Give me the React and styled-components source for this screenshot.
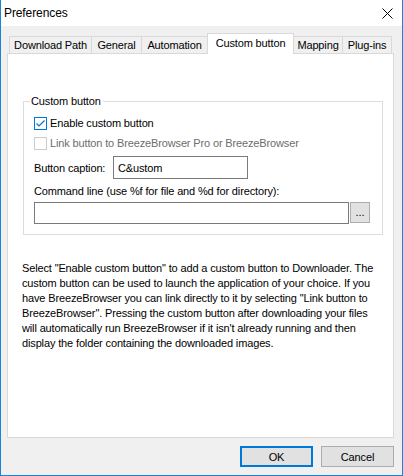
import React from "react";
import styled, { createGlobalStyle } from "styled-components";

const Global = createGlobalStyle`
  html, body { margin: 0; padding: 0; background: #f0f0f0; }
  body { font-family: "Liberation Sans", Arial, sans-serif; font-size: 11px; color: #000; }
  * { box-sizing: border-box; }
`;

const Window = styled.div`
  width: 403px;
  height: 476px;
  background: #f0f0f0;
  border: 1px solid #1883d7;
  border-top: none;
  display: flex;
  flex-direction: column;
  white-space: nowrap;
  letter-spacing: -0.14px;
`;

const TitleBar = styled.div`
  height: 26px;
  background: #fff;
  display: flex;
  align-items: center;
  justify-content: space-between;
  padding: 0 9px 0 3px;
  font-size: 12px;
  letter-spacing: -0.1px;
`;

const Body = styled.div`
  flex: 1;
  display: flex;
  flex-direction: column;
  padding: 7px 8px 8px 6px;
`;

const TabStrip = styled.div`
  display: flex;
  height: 20px;
  margin-left: 2px;
  position: relative;
  z-index: 1;
`;

const Tab = styled.div`
  width: ${(p) => p.$w}px;
  margin-left: ${(p) => (p.$first ? 0 : -1)}px;
  margin-top: ${(p) => (p.$active ? 0 : 3)}px;
  height: ${(p) => (p.$active ? 21 : 17)}px;
  border: 1px solid #d9d9d9;
  border-bottom: none;
  background: ${(p) => (p.$active ? "#fff" : "#f0f0f0")};
  display: flex;
  align-items: center;
  justify-content: center;
  padding-bottom: ${(p) => (p.$active ? 2 : 0)}px;
  position: relative;
  z-index: ${(p) => (p.$active ? 2 : 1)};
`;

const Panel = styled.div`
  height: 385px;
  background: #fff;
  border: 1px solid #d9d9d9;
  padding: 47px 10px 0 15px;
  display: flex;
  flex-direction: column;
`;

const GroupBox = styled.div`
  position: relative;
  border: 1px solid #dcdcdc;
  padding: 11px 0 10px 10px;
  display: flex;
  flex-direction: column;
`;

const GroupLabel = styled.span`
  position: absolute;
  top: -8px;
  left: 6px;
  background: #fff;
  padding: 0 2px 0 1px;
  line-height: 15px;
`;

const CheckRow = styled.label`
  height: 20px;
  display: flex;
  align-items: center;
  gap: 3px;
  color: ${(p) => (p.$disabled ? "#6d6d6d" : "#000")};
`;

const Box = styled.span`
  width: 13px;
  height: 13px;
  border: 1px solid ${(p) => (p.$disabled ? "#cccccc" : "#0078d7")};
  background: #fff;
  display: flex;
  align-items: center;
  justify-content: center;
`;

const FieldRow = styled.div`
  display: flex;
  align-items: center;
  margin-top: 3px;
`;

const FieldLabel = styled.span`
  width: 79px;
  flex-shrink: 0;
`;

const Edit = styled.div`
  width: ${(p) => p.$w}px;
  height: ${(p) => p.$h}px;
  flex-shrink: 0;
  border: 1px solid #7a7a7a;
  background: #fff;
  display: flex;
  align-items: center;
  padding-left: 4px;
`;

const BlockLabel = styled.div`
  margin-top: 5px;
  line-height: 15px;
  height: 15px;
`;

const CommandRow = styled.div`
  display: flex;
  align-items: flex-start;
  margin-top: 3px;
  gap: 1px;
`;

const SmallButton = styled.div`
  width: 20px;
  height: 21px;
  background: #e1e1e1;
  border: 1px solid #adadad;
  display: flex;
  align-items: flex-end;
  justify-content: center;
  padding-bottom: 4px;
  font-size: 11px;
  line-height: 11px;
  letter-spacing: 0;
`;

const Description = styled.div`
  margin: 26px 0 0 -1px;
  line-height: 15px;
`;

const ButtonRow = styled.div`
  display: flex;
  justify-content: flex-end;
  gap: 8px;
  margin-top: 8px;
`;

const DialogButton = styled.div`
  width: 73px;
  height: 21px;
  background: #e1e1e1;
  border: ${(p) => (p.$default ? "2px solid #0078d7" : "1px solid #adadad")};
  display: flex;
  align-items: center;
  justify-content: center;
`;

const tabs = [
  { t: "Download Path", w: 83 },
  { t: "General", w: 51 },
  { t: "Automation", w: 67 },
  { t: "Custom button", w: 87, active: true },
  { t: "Mapping", w: 50 },
  { t: "Plug-ins", w: 50 },
];

const lines = [
  'Select "Enable custom button" to add a custom button to Downloader. The',
  "custom button can be used to launch the application of your choice. If you",
  'have BreezeBrowser you can link directly to it by selecting "Link button to',
  'BreezeBrowser". Pressing the custom button after downloading your files',
  "will automatically run BreezeBrowser if it isn't already running and then",
  "display the folder containing the downloaded images.",
];

export default function App() {
  return (
    <>
      <Global />
      <Window>
        <TitleBar>
          <span>Preferences</span>
          <svg width="11" height="11" viewBox="0 0 11 11">
            <path d="M0.5 0.5L10.5 10.5M10.5 0.5L0.5 10.5" stroke="#000" strokeWidth="1" fill="none" />
          </svg>
        </TitleBar>
        <Body>
          <TabStrip>
            {tabs.map((tb, i) => (
              <Tab key={tb.t} $w={tb.w} $first={i === 0} $active={tb.active}>
                {tb.t}
              </Tab>
            ))}
          </TabStrip>
          <Panel>
            <GroupBox>
              <GroupLabel>Custom button</GroupLabel>
              <CheckRow>
                <Box>
                  <svg width="11" height="11" viewBox="0 0 11 11">
                    <path d="M1.5 5.5L4 8L9.5 2.5" stroke="#0078d7" strokeWidth="1.2" fill="none" />
                  </svg>
                </Box>
                Enable custom button
              </CheckRow>
              <CheckRow $disabled>
                <Box $disabled />
                Link button to BreezeBrowser Pro or BreezeBrowser
              </CheckRow>
              <FieldRow>
                <FieldLabel>Button caption:</FieldLabel>
                <Edit $w={135} $h={23}>C&amp;ustom</Edit>
              </FieldRow>
              <BlockLabel>Command line (use %f for file and %d for directory):</BlockLabel>
              <CommandRow>
                <Edit $w={315} $h={22} />
                <SmallButton>...</SmallButton>
              </CommandRow>
            </GroupBox>
            <Description>
              {lines.map((l) => (
                <div key={l}>{l}</div>
              ))}
            </Description>
          </Panel>
          <ButtonRow>
            <DialogButton $default>OK</DialogButton>
            <DialogButton>Cancel</DialogButton>
          </ButtonRow>
        </Body>
      </Window>
    </>
  );
}
